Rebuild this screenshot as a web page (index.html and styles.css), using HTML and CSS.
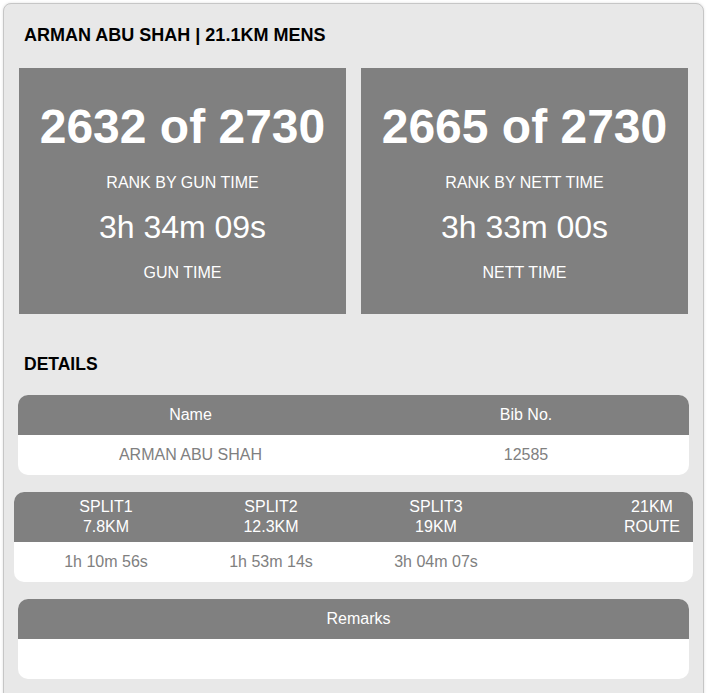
FILE: index.html
```html
<!DOCTYPE html>
<html lang="en">
<head>
<meta charset="utf-8">
<title>Result - ARMAN ABU SHAH</title>
<link rel="stylesheet" href="styles.css">
</head>
<body>
<div class="panel">
  <h2 class="title">ARMAN ABU SHAH | 21.1KM MENS</h2>
  <div class="stats">
    <div class="stat">
      <div class="stat-rank">2632 of 2730</div>
      <div class="stat-label">RANK BY GUN TIME</div>
      <div class="stat-time">3h 34m 09s</div>
      <div class="stat-label stat-label-last">GUN TIME</div>
    </div>
    <div class="stat">
      <div class="stat-rank">2665 of 2730</div>
      <div class="stat-label">RANK BY NETT TIME</div>
      <div class="stat-time">3h 33m 00s</div>
      <div class="stat-label stat-label-last">NETT TIME</div>
    </div>
  </div>
  <h3 class="section">DETAILS</h3>
  <div class="tbl tbl-details">
    <div class="th">Name</div>
    <div class="th">Bib No.</div>
    <div class="td">ARMAN ABU SHAH</div>
    <div class="td">12585</div>
  </div>
  <div class="tbl tbl-splits">
    <div class="th">SPLIT1<br>7.8KM</div>
    <div class="th">SPLIT2<br>12.3KM</div>
    <div class="th">SPLIT3<br>19KM</div>
    <div class="th th-route">21KM<br>ROUTE</div>
    <div class="td">1h 10m 56s</div>
    <div class="td">1h 53m 14s</div>
    <div class="td">3h 04m 07s</div>
    <div class="td"></div>
  </div>
  <div class="tbl tbl-remarks">
    <div class="th th-remarks">Remarks</div>
    <div class="td td-empty"></div>
  </div>
</div>
</body>
</html>
```

FILE: styles.css
```css
html, body {
  margin: 0;
  padding: 0;
  background: #ffffff;
  font-family: "Liberation Sans", Arial, sans-serif;
}

.panel {
  box-sizing: border-box;
  width: 701px;
  margin: 3px 0 0 3px;
  padding: 20px 0 40px;
  background: #e8e8e8;
  border: 1px solid #c6c6c6;
  border-radius: 8px;
  box-shadow: 0 0 3px rgba(0, 0, 0, 0.12);
}

.title {
  margin: 0 0 22px 20px;
  font-size: 18px;
  line-height: 22px;
  font-weight: bold;
  color: #000;
}

.stats {
  display: grid;
  grid-template-columns: 1fr 1fr;
  gap: 15px;
  margin: 0 15px;
}

.stat {
  background: #808080;
  color: #fff;
  text-align: center;
  padding: 31px 0 31px;
  display: flex;
  flex-direction: column;
  align-items: center;
}

.stat-rank {
  font-size: 48px;
  line-height: 56px;
  font-weight: bold;
}

.stat-label {
  font-size: 16px;
  line-height: 20px;
  margin-top: 18px;
}

.stat-time {
  font-size: 32px;
  line-height: 40px;
  margin-top: 14px;
}

.stat-label-last {
  margin-top: 16px;
}

.section {
  margin: 39px 0 20px 20px;
  font-size: 17.5px;
  line-height: 22px;
  font-weight: bold;
  color: #000;
}

.tbl {
  display: grid;
  border-radius: 10px;
  overflow: hidden;
  background: #fff;
  font-size: 16px;
  line-height: 20px;
  text-align: center;
}

.th {
  background: #808080;
  color: #fff;
  padding: 10px 0;
}

.td {
  color: #808080;
  padding: 10px 0;
}

.tbl-details {
  grid-template-columns: 345px 1fr;
  margin: 0 14px 17px;
}

.tbl-splits {
  grid-template-columns: 184px 146px 184px 1fr;
  margin: 0 10px 17px;
}

.tbl-splits .th {
  padding: 5px 0;
}

.tbl-splits .th-route {
  display: flex;
  justify-content: flex-end;
  padding-right: 13px;
}

.tbl-remarks {
  grid-template-columns: 1fr;
  margin: 0 14px;
}

.th-remarks {
  padding-left: 10px;
}

.td-empty {
  height: 20px;
}
```
